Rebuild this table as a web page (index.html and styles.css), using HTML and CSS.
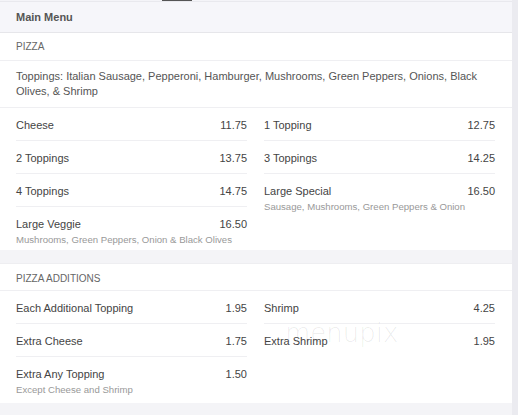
FILE: index.html
```html
<!DOCTYPE html>
<html>
<head>
<meta charset="utf-8">
<link rel="stylesheet" href="styles.css">
</head>
<body>
<div class="wrap">
  <div class="main">
    <div class="topbar"><span class="tab-mark"></span></div>
    <div class="header">Main Menu</div>

    <div class="section">
      <div class="sec-title">Pizza</div>
      <div class="sec-desc">Toppings: Italian Sausage, Pepperoni, Hamburger, Mushrooms, Green Peppers, Onions, Black Olives, &amp; Shrimp</div>
      <div class="grid">
        <div class="col">
          <div class="item"><div class="row"><span>Cheese</span><span>11.75</span></div></div>
          <div class="item"><div class="row"><span>2 Toppings</span><span>13.75</span></div></div>
          <div class="item"><div class="row"><span>4 Toppings</span><span>14.75</span></div></div>
          <div class="item has-note"><div class="row"><span>Large Veggie</span><span>16.50</span></div><div class="note">Mushrooms, Green Peppers, Onion &amp; Black Olives</div></div>
        </div>
        <div class="col">
          <div class="item"><div class="row"><span>1 Topping</span><span>12.75</span></div></div>
          <div class="item"><div class="row"><span>3 Toppings</span><span>14.25</span></div></div>
          <div class="item has-note"><div class="row"><span>Large Special</span><span>16.50</span></div><div class="note">Sausage, Mushrooms, Green Peppers &amp; Onion</div></div>
        </div>
      </div>
    </div>

    <div class="section second">
      <div class="sec-title low">Pizza Additions</div>
      <div class="grid">
        <div class="col">
          <div class="item"><div class="row"><span>Each Additional Topping</span><span>1.95</span></div></div>
          <div class="item"><div class="row"><span>Extra Cheese</span><span>1.75</span></div></div>
          <div class="item has-note"><div class="row"><span>Extra Any Topping</span><span>1.50</span></div><div class="note">Except Cheese and Shrimp</div></div>
        </div>
        <div class="col">
          <div class="item"><div class="row"><span>Shrimp</span><span>4.25</span></div></div>
          <div class="item"><div class="row"><span>Extra Shrimp</span><span>1.95</span></div></div>
        </div>
      </div>
      <div class="watermark">menupix</div>
    </div>
  </div>
  <div class="track"></div>
</div>
</body>
</html>
```
FILE: styles.css
```css
html, body {
  margin: 0;
  padding: 0;
}
body {
  background: #f4f4f8;
  font-family: "Liberation Sans", Arial, sans-serif;
  color: #444;
  width: 518px;
  height: 415px;
  overflow: hidden;
}
.wrap {
  display: flex;
  height: 415px;
}
.main {
  width: 512px;
  background: #f4f4f7;
}
.track {
  width: 6px;
  background: #ebebf0;
}
.topbar {
  height: 1px;
  border-bottom: 1px solid #e9e9ee;
  background: #f4f4f8;
  display: flex;
}
.tab-mark {
  margin-left: 162px;
  width: 30px;
  height: 1px;
  background: #555;
}
.header {
  height: 30px;
  line-height: 30px;
  padding-left: 16px;
  background: #f6f6fa;
  border-bottom: 1px solid #e6e6ea;
  font-size: 11px;
  font-weight: bold;
  color: #555;
}
.section {
  background: #fff;
  position: relative;
}
.section.second {
  margin-top: 13px;
  padding-bottom: 3px;
  border-top: 1px solid #eeeef1;
}
.sec-title {
  height: 27px;
  line-height: 27px;
  padding-left: 16px;
  font-size: 10px;
  text-transform: uppercase;
  color: #666;
  border-bottom: 1px solid #efeff2;
}
.sec-title.low {
  height: 23px;
  line-height: 23px;
  padding-top: 3px;
}
.sec-desc {
  padding: 8px 17px 8px 16px;
  font-size: 11px;
  line-height: 15px;
  color: #555;
  border-bottom: 1px solid #efeff2;
}
.grid {
  display: grid;
  grid-template-columns: 231px 231px;
  column-gap: 17px;
  padding: 0 17px 0 16px;
  align-items: start;
}
.col {
  display: flex;
  flex-direction: column;
}
.item {
  padding: 9px 0 7px;
  border-bottom: 1px solid #efeff2;
}
.item:last-child {
  border-bottom: none;
}
.item.has-note {
  padding-bottom: 4px;
}
.row {
  display: flex;
  justify-content: space-between;
  font-size: 11px;
  line-height: 16px;
  color: #444;
}
.note {
  margin-top: 1px;
  font-size: 9.6px;
  line-height: 13px;
  color: #999;
}
.watermark {
  position: absolute;
  left: 285px;
  top: 54px;
  font-family: "DejaVu Sans", sans-serif;
  font-weight: 200;
  font-size: 26px;
  color: rgba(0, 0, 0, 0.08);
  pointer-events: none;
}
```
